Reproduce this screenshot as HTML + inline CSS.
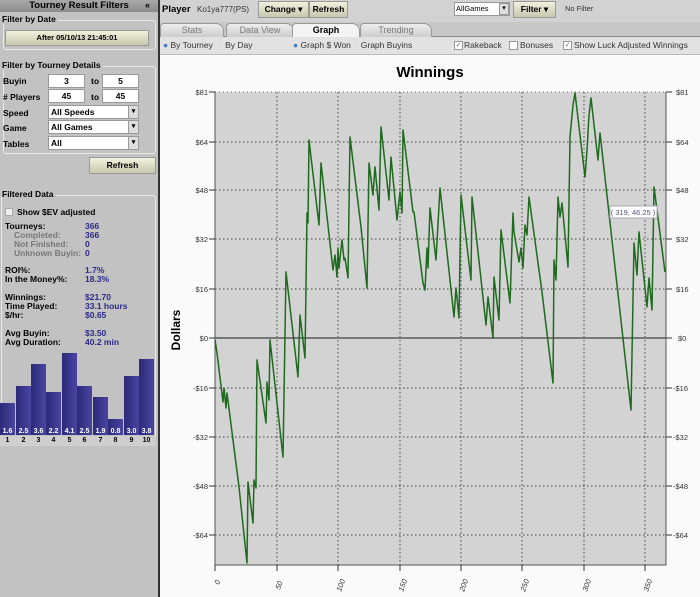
<!DOCTYPE html>
<html><head><meta charset="utf-8"><style>
*{margin:0;padding:0;box-sizing:border-box}
body{width:700px;height:597px;overflow:hidden;background:#fafafa;font-family:"Liberation Sans",sans-serif;font-size:8px;position:relative;color:#000}
.a{position:absolute;white-space:nowrap}
.b{font-weight:bold}
#left{position:absolute;left:0;top:0;width:158px;height:597px;background:#c2c2c2;font-size:8.5px}
#div{position:absolute;left:158px;top:0;width:2px;height:597px;background:#333}
.inp{position:absolute;background:#fff;border:1px solid #999;font-weight:bold;text-align:center;font-size:8.5px;line-height:12px;height:14px}
.sel{position:absolute;background:#fff;border:1px solid #999;font-weight:bold;font-size:8.5px;line-height:12px;height:14px;padding-left:2px}
.sel:after{content:"▾";position:absolute;right:0;top:0;width:9px;height:12px;background:#ddd;border-left:1px solid #999;font-size:7px;text-align:center}
.btn{position:absolute;background:linear-gradient(#f0f0dc,#c8c8b0);border:1px solid #999;font-weight:bold;text-align:center}
.grp{position:absolute;border:1px solid #e8e8e8;border-radius:3px}
.lbl{color:#2a2a8a;font-weight:bold}
.gr{color:#777;font-weight:bold}
.bar{position:absolute;background:linear-gradient(90deg,#2c2a7a,#4a44a0);bottom:162px;width:15px}
.bl{position:absolute;color:#fff;font-size:7px;font-weight:bold;top:428px;width:15px;text-align:center}
.bn{position:absolute;font-size:7px;font-weight:bold;top:437px;width:15px;text-align:center}
.tab{position:absolute;top:23px;height:14px;border:1px solid #999;border-bottom:none;background:linear-gradient(#eee,#ccc);color:#777;font-size:9px;text-align:center;line-height:13px;border-radius:4px 8px 0 0}
</style></head><body>
<div id="left">
 <div class="a b" style="left:0;top:0;width:158px;height:12px;background:linear-gradient(#aaa,#8a8a8a);font-size:9.5px;text-align:center;line-height:11px">Tourney Result Filters</div>
 <div class="a b" style="left:145px;top:0;font-size:9px">«</div>
 <div class="grp" style="left:3px;top:20px;width:153px;height:30px"></div>
 <div class="a b" style="left:2px;top:14px;background:#c2c2c2;padding-right:2px">Filter by Date</div>
 <div class="btn" style="left:5px;top:30px;width:144px;height:16px;line-height:14px;font-size:7.5px">After 05/10/13 21:45:01</div>
 <div class="grp" style="left:3px;top:66px;width:153px;height:88px"></div>
 <div class="a b" style="left:2px;top:60px;background:#c2c2c2;padding-right:2px">Filter by Tourney Details</div>
 <div class="a b" style="left:3px;top:76px">Buyin</div>
 <div class="inp" style="left:48px;top:74px;width:37px">3</div>
 <div class="a b" style="left:91px;top:76px">to</div>
 <div class="inp" style="left:102px;top:74px;width:37px">5</div>
 <div class="a b" style="left:3px;top:92px"># Players</div>
 <div class="inp" style="left:48px;top:89px;width:37px">45</div>
 <div class="a b" style="left:91px;top:92px">to</div>
 <div class="inp" style="left:102px;top:89px;width:37px">45</div>
 <div class="a b" style="left:3px;top:108px">Speed</div>
 <div class="sel" style="left:48px;top:105px;width:91px">All Speeds</div>
 <div class="a b" style="left:3px;top:123px">Game</div>
 <div class="sel" style="left:48px;top:120px;width:91px">All Games</div>
 <div class="a b" style="left:3px;top:139px">Tables</div>
 <div class="sel" style="left:48px;top:136px;width:91px">All</div>
 <div class="btn" style="left:89px;top:157px;width:67px;height:17px;line-height:15px;font-size:8.5px">Refresh</div>
 <div class="grp" style="left:1px;top:195px;width:155px;height:250px"></div>
 <div class="a b" style="left:2px;top:189px;background:#c2c2c2;padding-right:2px">Filtered Data</div>
 <div class="a" style="left:5px;top:208px;width:8px;height:8px;background:#eee;border:1px solid #aaa"></div>
 <div class="a b" style="left:17px;top:207px">Show $EV adjusted</div>
 <div class="a b" style="left:5px;top:222px;line-height:9px">Tourneys:</div>
 <div class="a gr" style="left:14px;top:231px;line-height:9px">Completed:<br>Not Finished:<br>Unknown Buyin:</div>
 <div class="a lbl" style="left:85px;top:222px;line-height:9px">366<br>366<br>0<br>0</div>
 <div class="a b" style="left:5px;top:266px;line-height:9px">ROI%:<br>In the Money%:</div>
 <div class="a lbl" style="left:85px;top:266px;line-height:9px">1.7%<br>18.3%</div>
 <div class="a b" style="left:5px;top:293px;line-height:9px">Winnings:<br>Time Played:<br>$/hr:</div>
 <div class="a lbl" style="left:85px;top:293px;line-height:9px">$21.70<br>33.1 hours<br>$0.65</div>
 <div class="a b" style="left:5px;top:329px;line-height:9px">Avg Buyin:<br>Avg Duration:</div>
 <div class="a lbl" style="left:85px;top:329px;line-height:9px">$3.50<br>40.2 min</div>
 <div class="bar" style="left:0;height:32px"></div>
 <div class="bar" style="left:16px;height:49px"></div>
 <div class="bar" style="left:31px;height:71px"></div>
 <div class="bar" style="left:46px;height:43px"></div>
 <div class="bar" style="left:62px;height:82px"></div>
 <div class="bar" style="left:77px;height:49px"></div>
 <div class="bar" style="left:93px;height:38px"></div>
 <div class="bar" style="left:108px;height:16px"></div>
 <div class="bar" style="left:124px;height:59px"></div>
 <div class="bar" style="left:139px;height:76px"></div>
 <div class="bl" style="left:0">1.6</div><div class="bl" style="left:16px">2.5</div><div class="bl" style="left:31px">3.6</div><div class="bl" style="left:46px">2.2</div><div class="bl" style="left:62px">4.1</div><div class="bl" style="left:77px">2.5</div><div class="bl" style="left:93px">1.9</div><div class="bl" style="left:108px">0.8</div><div class="bl" style="left:124px">3.0</div><div class="bl" style="left:139px">3.8</div>
 <div class="a" style="left:0;top:436px;width:156px;height:10px;background:#cfcfcf"></div>
 <div class="bn" style="left:0">1</div><div class="bn" style="left:16px">2</div><div class="bn" style="left:31px">3</div><div class="bn" style="left:46px">4</div><div class="bn" style="left:62px">5</div><div class="bn" style="left:77px">6</div><div class="bn" style="left:93px">7</div><div class="bn" style="left:108px">8</div><div class="bn" style="left:124px">9</div><div class="bn" style="left:139px">10</div>
</div>
<div id="div"></div>
<div class="a" style="left:160px;top:0;width:540px;height:22px;background:#d2d2d2"></div>
<div class="a b" style="left:162px;top:4px;font-size:9.5px">Player</div>
<div class="a" style="left:197px;top:5px;font-size:8px;color:#333">Ko1ya777(PS)</div>
<div class="btn" style="left:258px;top:1px;width:51px;height:17px;line-height:15px;font-size:8.5px">Change ▾</div>
<div class="btn" style="left:309px;top:1px;width:39px;height:17px;line-height:15px;font-size:8.5px">Refresh</div>
<div class="a" style="left:454px;top:2px;width:56px;height:14px;background:#fff;border:1px solid #999;font-size:7.5px;line-height:12px;padding-left:1px">AllGames</div>
<div class="a" style="left:499px;top:3px;width:10px;height:12px;background:#ddd;border:1px solid #999;font-size:7px;text-align:center">▾</div>
<div class="btn" style="left:513px;top:1px;width:43px;height:17px;line-height:15px;font-size:8.5px">Filter ▾</div>
<div class="a" style="left:565px;top:4px;font-size:7.5px;color:#333">No Filter</div>
<div class="a" style="left:160px;top:22px;width:540px;height:15px;background:#c8c8c8;border-bottom:1px solid #888"></div>
<div class="tab" style="left:160px;width:64px">Stats</div>
<div class="tab" style="left:226px;width:68px">Data View</div>
<div class="tab" style="left:292px;width:68px;background:#f4f4f4;color:#000;font-weight:bold;height:15px">Graph</div>
<div class="tab" style="left:360px;width:72px">Trending</div>
<div class="a" style="left:160px;top:37px;width:540px;height:18px;background:#e2e2e2;border-bottom:1px solid #bbb"></div>
<div class="a" style="left:163px;top:40px;font-size:8.5px;color:#333"><span style="color:#4a7ac0">●</span> By Tourney &nbsp;<span style="color:#ddd">●</span> By Day</div>
<div class="a" style="left:293px;top:40px;font-size:8.5px;color:#333"><span style="color:#4a7ac0">●</span> Graph $ Won <span style="color:#ddd">●</span> Graph Buyins</div>
<div class="a" style="left:454px;top:41px;width:9px;height:9px;border:1px solid #999;background:#fff;font-size:7px;line-height:7px;text-align:center;color:#666">✓</div>
<div class="a" style="left:464px;top:40px;font-size:8.5px;color:#333">Rakeback</div>
<div class="a" style="left:509px;top:41px;width:9px;height:9px;border:1px solid #999;background:#fff"></div>
<div class="a" style="left:520px;top:40px;font-size:8.5px;color:#333">Bonuses</div>
<div class="a" style="left:563px;top:41px;width:9px;height:9px;border:1px solid #999;background:#fff;font-size:7px;line-height:7px;text-align:center;color:#666">✓</div>
<div class="a" style="left:574px;top:40px;font-size:8.5px;color:#333">Show Luck Adjusted Winnings</div>
<svg class="a" style="left:0;top:0" width="700" height="597" viewBox="0 0 700 597">
<text x="430" y="77" font-family="Liberation Sans,sans-serif" font-weight="bold" font-size="15" text-anchor="middle">Winnings</text>
<text x="180" y="330" font-family="Liberation Sans,sans-serif" font-weight="bold" font-size="12" text-anchor="middle" transform="rotate(-90 180 330)">Dollars</text>
<rect x="215" y="92" width="451" height="473" fill="#d3d3d3"/>
<g stroke="#444" stroke-width="1" stroke-dasharray="1.5,2.5" fill="none">
<path d="M277 92V565M338 92V565M400 92V565M461 92V565M522 92V565M584 92V565M645 92V565"/>
<path d="M215 142H666M215 190H666M215 239H666M215 289H666M215 388H666M215 437H666M215 486H666M215 535H666"/>
</g>
<path d="M215 92H666" stroke="#666" stroke-dasharray="1,3"/>
<path d="M215 338H666" stroke="#777" stroke-width="2"/>
<path d="M215 92V565H666V92" stroke="#555" fill="none"/>
<g font-family="Liberation Sans,sans-serif" font-size="7.5" fill="#333">
<text x="208" y="95" text-anchor="end">$81</text><text x="208" y="145" text-anchor="end">$64</text><text x="208" y="193" text-anchor="end">$48</text><text x="208" y="242" text-anchor="end">$32</text><text x="208" y="292" text-anchor="end">$16</text><text x="208" y="341" text-anchor="end">$0</text><text x="208" y="391" text-anchor="end">-$16</text><text x="208" y="440" text-anchor="end">-$32</text><text x="208" y="489" text-anchor="end">-$48</text><text x="208" y="538" text-anchor="end">-$64</text>
<text x="676" y="95">$81</text><text x="676" y="145">$64</text><text x="676" y="193">$48</text><text x="676" y="242">$32</text><text x="676" y="292">$16</text><text x="678" y="341">$0</text><text x="673" y="391">-$16</text><text x="673" y="440">-$32</text><text x="673" y="489">-$48</text><text x="673" y="538">-$64</text>
<text transform="translate(219,585) rotate(-70)" font-style="italic">0</text>
<text transform="translate(280,590) rotate(-70)" font-style="italic">50</text>
<text transform="translate(341,592) rotate(-70)" font-style="italic">100</text>
<text transform="translate(403,592) rotate(-70)" font-style="italic">150</text>
<text transform="translate(464,592) rotate(-70)" font-style="italic">200</text>
<text transform="translate(525,592) rotate(-70)" font-style="italic">250</text>
<text transform="translate(587,592) rotate(-70)" font-style="italic">300</text>
<text transform="translate(648,592) rotate(-70)" font-style="italic">350</text>
</g>
<g stroke="#333">
<path d="M209 92H215M209 142H215M209 190H215M209 239H215M209 289H215M209 338H215M209 388H215M209 437H215M209 486H215M209 535H215"/>
<path d="M666 92H672M666 142H672M666 190H672M666 239H672M666 289H672M666 338H672M666 388H672M666 437H672M666 486H672M666 535H672"/>
<path d="M215 565V571M277 565V571M338 565V571M400 565V571M461 565V571M522 565V571M584 565V571M645 565V571"/>
</g>
<polyline fill="none" stroke="#1e6a1e" stroke-width="1.5" stroke-linejoin="round" points="215,340 217,353 223,402 224,388 226,408 227,393 239,487 247,563 248,482 253,523 254,480 256,488 257,360 266,423 267,382 269,400 270,340 283,457 286,272 298,377 300,315 305,358 307,213 308,223 309,140 319,225 321,163 333,270 335,255 337,277 338,248 339,268 342,240 344,260 345,258 348,278 350,137 361,227 367,288 369,163 373,195 375,167 379,210 381,127 389,200 391,157 397,220 400,192 402,213 403,130 413,212 414,212 423,283 425,290 427,248 428,268 430,208 436,260 440,188 454,317 456,288 459,318 461,195 471,280 472,197 486,325 488,297 493,338 494,277 499,320 501,230 510,303 513,213 514,232 519,262 521,248 523,268 525,225 527,235 529,197 542,292 553,383 554,260 556,280 558,197 560,217 562,203 568,267 570,137 573,105 575,93 585,177 587,150 589,115 591,98 598,160 600,133 631,410 634,243 637,275 639,232 647,307 649,278 652,310 654,187 665,272"/>
<rect x="610" y="206" width="47" height="12" fill="#fff" stroke="#aab"/>
<text x="633" y="215" font-family="Liberation Sans,sans-serif" font-size="7.5" fill="#557" text-anchor="middle">( 319, 46.25 )</text>
</svg>
</body></html>
